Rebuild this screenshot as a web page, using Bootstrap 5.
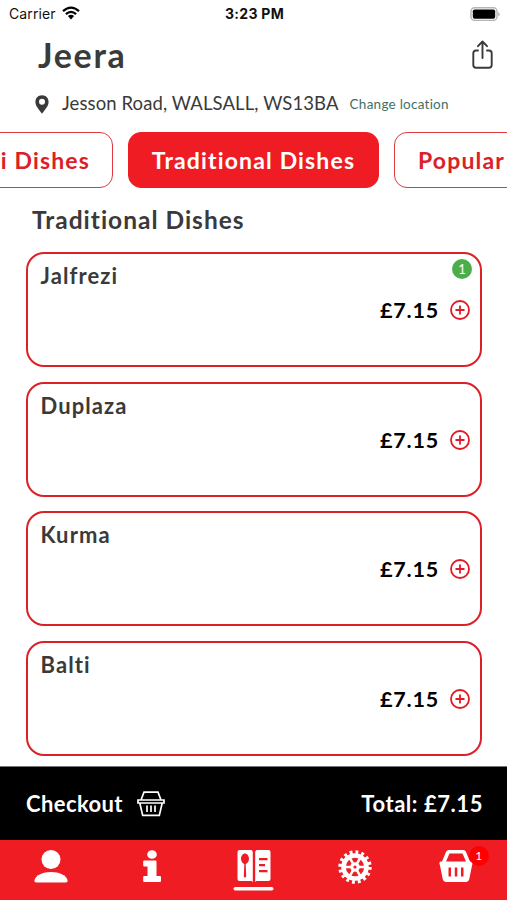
<!DOCTYPE html>
<html lang="en">
<head>
<meta charset="utf-8">
<meta name="viewport" content="width=device-width, initial-scale=1">
<title>Jeera</title>
<link href="https://cdn.jsdelivr.net/npm/bootstrap@5.3.0/dist/css/bootstrap.min.css" rel="stylesheet">
<style>
  :root { --brand: #ef1c24; --ink: #3a3a3a; }
  body { font-family: Lato, "Open Sans", sans-serif; color: var(--ink); background: #fff; }
  svg { display: block; flex: none; }
  .screen { width: 507px; height: 900px; }
  .status { height: 27px; font-family: Inter, sans-serif; font-size: 14px; line-height: 27px; color: #111; padding: 0 7px 0 9px; }
  .status > div { flex: 1 1 0; }
  .carrier { letter-spacing: .12px; }
  .wifi { margin: -2px 0 0 6px; }
  .clock { font-weight: 700; font-size: 14px; letter-spacing: .3px; text-align: center; }
  .title-row { height: 54px; padding: 1px 14px 0 38px; }
  .shop-name { font-size: 34px; line-height: 54px; font-weight: 700; letter-spacing: 1.7px; }
  .place { height: 51px; padding: 0 0 5px 35px; }
  .address { font-size: 18.5px; margin-left: 13px; letter-spacing: .1px; }
  .change { font-size: 13.5px; margin-left: 11px; color: #427065; letter-spacing: .25px; }
  .tabs { height: 56px; gap: 15px; margin-left: -138px; }
  .tab { --bs-btn-color: #dc2027; --bs-btn-border-color: #e0383e; --bs-btn-border-radius: 13px; --bs-btn-padding-x: 0; --bs-btn-padding-y: 0;
         width: 251px; flex: none; font-size: 23px; font-weight: 700; line-height: 52px; letter-spacing: 1.15px; }
  .tab.active { --bs-btn-active-bg: var(--brand); --bs-btn-active-border-color: var(--brand); --bs-btn-active-color: #fff; }
  .tab-prev { text-align: right; padding-right: 22px; }
  .tab-next { text-align: left; padding-left: 23px; }
  .section-title { height: 64px; line-height: 64px; padding-left: 32px; font-size: 24.5px; font-weight: 700; letter-spacing: 1px; }
  .dishes { gap: 14.5px; padding: 0 25px 0 25.5px; height: 514px; }
  .dish { --bs-card-border-color: #dc2027; --bs-card-border-width: 2.5px; --bs-card-border-radius: 18px; height: 115px; flex: none; color: var(--ink); }
  .dish-name { font-size: 22px; font-weight: 700; line-height: 28px; padding: 8px 0 0 13px; letter-spacing: 1.1px; }
  .dish-price { height: 28px; padding-right: 10px; margin-top: 6px; gap: 11px; }
  .amount { font-size: 21.5px; font-weight: 700; line-height: 28px; color: #000; letter-spacing: .8px; }
  .count { position: absolute; right: 8px; top: 5px; width: 20px; height: 20px; border-radius: 50%; background: #4bae4a; color: #fff; font-size: 13px; line-height: 20px; text-align: center; }
  .checkout { height: 74px; background: #000; border-top: 1px solid #777; color: #fff; font-size: 22px; font-weight: 700; padding: 0 24px 0 26px; }
  .checkout-label { letter-spacing: .4px; }
  .total { letter-spacing: .55px; }
  .basket { margin-left: 14px; }
  .tabbar { height: 60px; background: var(--brand); }
  .tabbar .nav-item { height: 60px; padding-top: 9px; }
  .cart-count { position: absolute; left: 63px; top: 6px; width: 20px; height: 20px; border-radius: 50%; background: #fe0000; color: #fff; font-size: 12px; line-height: 20px; text-align: center; }
</style>
</head>
<body>
<div class="screen d-flex flex-column overflow-hidden">
  <div class="status d-flex align-items-center">
    <div class="d-flex align-items-center"><span class="carrier">Carrier</span>
      <svg class="wifi" width="18" height="14" viewBox="0 0 18 14" fill="none" stroke="#000" stroke-width="2.3"><path d="M1 5.2Q9-2 17 5.2M3.9 8.1Q9 3.6 14.1 8.1"/><path d="M5.9 10.1Q9 7.6 12.1 10.1L9 13.4Z" fill="#000" stroke="none"/></svg>
    </div>
    <div class="clock">3:23 PM</div>
    <div class="d-flex justify-content-end">
      <svg width="30" height="14" viewBox="0 0 30 14"><rect x="1" y=".8" width="26" height="12.6" rx="3.6" fill="#fff" stroke="#b5b5b5" stroke-width="1.4"/><rect x="2.8" y="2.5" width="22.4" height="9.2" rx="1.8" fill="#000"/><path d="M28.2 5v4.4Q29.8 8.6 29.8 7.2T28.2 5Z" fill="#b5b5b5"/></svg>
    </div>
  </div>

  <header class="title-row d-flex align-items-center justify-content-between">
    <h1 class="shop-name m-0">Jeera</h1>
    <svg width="21" height="30" viewBox="0 0 21 30" fill="none" stroke="#3a3a3a" stroke-width="1.9" stroke-linecap="round" stroke-linejoin="round"><path d="M6 10.500H4Q1.300 10.500 1.300 13.200V25Q1.300 27.700 4 27.700H17Q19.700 27.700 19.700 25V13.200Q19.700 10.500 17 10.500H15M10.500 18V1.800M6 6.200L10.500 1.500L15 6.200"/></svg>
  </header>

  <div class="place d-flex align-items-center text-nowrap">
    <svg width="14" height="19" viewBox="0 0 14 19"><path fill="#3a3a3a" fill-rule="evenodd" d="M7 .3C3.100.3.400 3.100.400 6.900C.400 11 4 14.300 7 18.700C10 14.300 13.600 11 13.600 6.900C13.600 3.100 10.900.3 7 .3ZM7 3.800A3 3 0 1 1 7 9.800A3 3 0 1 1 7 3.800Z"/></svg>
    <span class="address">Jesson Road, WALSALL, WS13BA</span>
    <a class="change text-decoration-none" href="#">Change location</a>
  </div>

  <nav class="tabs d-flex">
    <button class="tab tab-prev btn">Balti Dishes</button>
    <button class="tab btn active">Traditional Dishes</button>
    <button class="tab tab-next btn">Popular</button>
  </nav>

  <h2 class="section-title m-0">Traditional Dishes</h2>

  <main class="dishes d-flex flex-column">
    <article class="dish card">
      <span class="count">1</span>
      <div class="dish-name">Jalfrezi</div>
      <div class="dish-price d-flex justify-content-end align-items-center"><span class="amount">£7.15</span><svg width="20" height="20" viewBox="0 0 20 20" fill="none" stroke="#e01b24" stroke-width="1.8"><circle cx="10" cy="10" r="9"/><path d="M5.500 10H14.500M10 5.500V14.500"/></svg></div>
    </article>
    <article class="dish card">
      <div class="dish-name">Duplaza</div>
      <div class="dish-price d-flex justify-content-end align-items-center"><span class="amount">£7.15</span><svg width="20" height="20" viewBox="0 0 20 20" fill="none" stroke="#e01b24" stroke-width="1.8"><circle cx="10" cy="10" r="9"/><path d="M5.500 10H14.500M10 5.500V14.500"/></svg></div>
    </article>
    <article class="dish card">
      <div class="dish-name">Kurma</div>
      <div class="dish-price d-flex justify-content-end align-items-center"><span class="amount">£7.15</span><svg width="20" height="20" viewBox="0 0 20 20" fill="none" stroke="#e01b24" stroke-width="1.8"><circle cx="10" cy="10" r="9"/><path d="M5.500 10H14.500M10 5.500V14.500"/></svg></div>
    </article>
    <article class="dish card">
      <div class="dish-name">Balti</div>
      <div class="dish-price d-flex justify-content-end align-items-center"><span class="amount">£7.15</span><svg width="20" height="20" viewBox="0 0 20 20" fill="none" stroke="#e01b24" stroke-width="1.8"><circle cx="10" cy="10" r="9"/><path d="M5.500 10H14.500M10 5.500V14.500"/></svg></div>
    </article>
  </main>

  <div class="checkout d-flex align-items-center justify-content-between">
    <div class="d-flex align-items-center"><span class="checkout-label">Checkout</span>
      <svg class="basket" width="28" height="26" viewBox="0 0 28 26" fill="none" stroke="#fff" stroke-width="1.7"><path d="M4 9L7 1.200H21L24 9M1 9H27V12H25.200L22.300 24.400H5.700L2.800 12H1V9ZM2.800 12H25.200M10 14.500V21M14 14.500V21M18 14.500V21"/></svg>
    </div>
    <span class="total">Total: £7.15</span>
  </div>

  <nav class="tabbar nav nav-justified flex-nowrap">
    <a class="nav-item d-flex justify-content-center" href="#" aria-label="Account">
      <svg width="36" height="36" viewBox="0 0 36 36" fill="#fff"><circle cx="18" cy="10.500" r="9.500"/><path d="M1.500 31C2.800 26 9.800 23 18 23S33.200 26 34.500 31Q35 33.500 32.500 33.500H3.500Q1 33.500 1.500 31Z"/></svg>
    </a>
    <a class="nav-item d-flex justify-content-center" href="#" aria-label="Information">
      <svg width="20" height="36" viewBox="0 0 20 36" fill="#fff"><ellipse cx="10" cy="5.500" rx="4.800" ry="4.300"/><path d="M2.200 11.500H13.500Q14.500 11.500 14.500 12.500V27H18Q19 27 19 28V32Q19 33 18 33H2.200Q1.200 33 1.200 32V28Q1.200 27 2.200 27H5.500V17.500H2.200Q1.200 17.500 1.200 16.500V12.500Q1.200 11.500 2.200 11.500Z"/></svg>
    </a>
    <a class="nav-item d-flex justify-content-center" href="#" aria-label="Menu">
      <svg width="42" height="44" viewBox="0 0 42 44" fill="#fff"><path fill-rule="evenodd" d="M6.500 1H18.500L19.800 2.500V33L18.500 32H6.500Q4.500 32 4.500 30V3Q4.500 1 6.500 1ZM12 4.500C9.700 4.500 8 7 8 9.800C8 12.300 9.600 14.500 11.300 15.200L10.800 27Q10.800 28.500 12 28.500T13.200 27L12.700 15.200C14.400 14.500 16 12.300 16 9.800C16 7 14.300 4.500 12 4.500Z"/><path fill-rule="evenodd" d="M23.500 1H35.500Q37.500 1 37.500 3V30Q37.500 32 35.500 32H23.500L22.200 33V2.500ZM26 9V11.200H34.500V9ZM26 15V17.200H32V15ZM26 21V23.200H34.500V21Z"/><rect x=".5" y="38" width="40" height="3.6" rx="1.800"/></svg>
    </a>
    <a class="nav-item d-flex justify-content-center" href="#" aria-label="Settings">
      <svg width="36" height="36" viewBox="-18 -18 36 36" fill="none" stroke="#fff"><circle r="14.900" stroke-width="3.600" stroke-dasharray="2.850 3.002"/><circle r="11.500" stroke-width="4.600"/><circle r="3.200" stroke-width="3.200"/><path stroke-width="2.500" d="M3 0H11M-3 0H-11M1.500 2.600L5.500 9.500M-1.500 2.600L-5.500 9.500M1.500-2.600L5.500-9.500M-1.500-2.600L-5.500-9.500"/></svg>
    </a>
    <a class="nav-item d-flex justify-content-center position-relative" href="#" aria-label="Basket">
      <svg width="36" height="36" viewBox="0 0 36 36"><path fill="#fff" fill-rule="evenodd" d="M10.500 1H25.500Q27 1 27.800 2.500L32 12.500H33Q35 12.500 34.600 14.500L34 16.500L31.300 30Q30.600 33 27.500 33H8.500Q5.400 33 4.700 30L2 16.500L1.400 14.500Q1 12.500 3 12.500H4L8.200 2.500Q9 1 10.500 1ZM11.500 4.500L8 12.500H28L24.500 4.500ZM10.500 18.500V27.500H13V18.500ZM16.800 18.500V27.500H19.300V18.500ZM23 18.500V27.500H25.500V18.500Z"/></svg>
      <span class="cart-count">1</span>
    </a>
  </nav>
</div>
<script src="https://cdn.jsdelivr.net/npm/bootstrap@5.3.0/dist/js/bootstrap.bundle.min.js"></script>
</body>
</html>
